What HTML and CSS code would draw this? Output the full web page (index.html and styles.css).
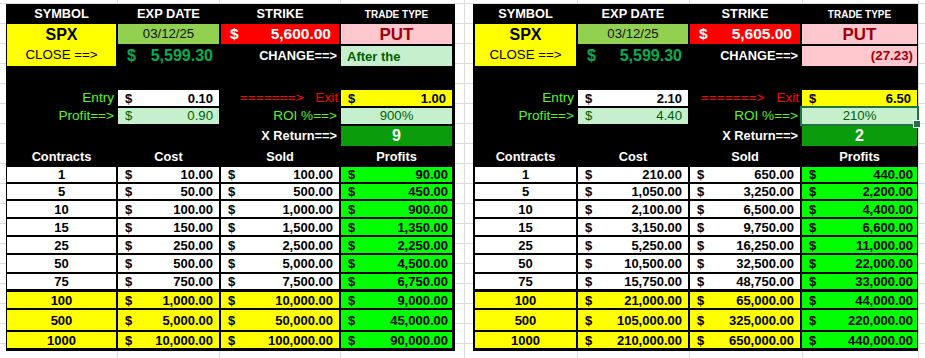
FILE: index.html
```html
<!DOCTYPE html>
<html lang="en">
<head>
<meta charset="utf-8">
<title>SPX Put Trade Calculator</title>
<link rel="stylesheet" href="styles.css">
</head>
<body>
<div class="sheet">
  <section class="calc calc--left">
    <div class="row row--head">
      <div class="cell hd">SYMBOL</div>
      <div class="cell hd">EXP DATE</div>
      <div class="cell hd">STRIKE</div>
      <div class="cell hd hd--small">TRADE TYPE</div>
    </div>
    <div class="row row--quote">
      <div class="cell symbol">SPX</div>
      <div class="cell date">03/12/25</div>
      <div class="cell money strike"><span>$</span><span>5,600.00</span></div>
      <div class="cell type">PUT</div>
    </div>
    <div class="row row--close">
      <div class="cell close-label">CLOSE ==&gt;</div>
      <div class="cell money close-price"><span>$</span><span>5,599.30</span></div>
      <div class="cell label-white">CHANGE==&gt;</div>
      <div class="cell change change--note">After the</div>
    </div>
    <div class="spacer"></div>
    <div class="inputs">
      <div class="row row--input">
        <div class="cell label-green">Entry</div>
        <div class="cell money entry"><span>$</span><span>0.10</span></div>
        <div class="cell exit-label"><span>=======&gt;</span><span>Exit</span></div>
        <div class="cell money exit"><span>$</span><span>1.00</span></div>
      </div>
      <div class="row row--input">
        <div class="cell label-green">Profit==&gt;</div>
        <div class="cell money profit"><span>$</span><span>0.90</span></div>
        <div class="cell label-green">ROI %==&gt;</div>
        <div class="cell roi">900%</div>
      </div>
      <div class="row row--xret">
        <div class="cell"></div>
        <div class="cell"></div>
        <div class="cell label-white">X Return==&gt;</div>
        <div class="cell xret">9</div>
      </div>
    </div>
    <div class="row row--colhead">
      <div class="cell colhead">Contracts</div>
      <div class="cell colhead">Cost</div>
      <div class="cell colhead">Sold</div>
      <div class="cell colhead">Profits</div>
    </div>
    <div class="data">
      <div class="row drow h15"><div class="cell qty">1</div><div class="cell money d"><span>$</span><span>10.00</span></div><div class="cell money d"><span>$</span><span>100.00</span></div><div class="cell money d gain"><span>$</span><span>90.00</span></div></div>
      <div class="row drow h15"><div class="cell qty">5</div><div class="cell money d"><span>$</span><span>50.00</span></div><div class="cell money d"><span>$</span><span>500.00</span></div><div class="cell money d gain"><span>$</span><span>450.00</span></div></div>
      <div class="row drow h16"><div class="cell qty">10</div><div class="cell money d"><span>$</span><span>100.00</span></div><div class="cell money d"><span>$</span><span>1,000.00</span></div><div class="cell money d gain"><span>$</span><span>900.00</span></div></div>
      <div class="row drow h16"><div class="cell qty">15</div><div class="cell money d"><span>$</span><span>150.00</span></div><div class="cell money d"><span>$</span><span>1,500.00</span></div><div class="cell money d gain"><span>$</span><span>1,350.00</span></div></div>
      <div class="row drow h16"><div class="cell qty">25</div><div class="cell money d"><span>$</span><span>250.00</span></div><div class="cell money d"><span>$</span><span>2,500.00</span></div><div class="cell money d gain"><span>$</span><span>2,250.00</span></div></div>
      <div class="row drow h17"><div class="cell qty">50</div><div class="cell money d"><span>$</span><span>500.00</span></div><div class="cell money d"><span>$</span><span>5,000.00</span></div><div class="cell money d gain"><span>$</span><span>4,500.00</span></div></div>
      <div class="row drow h15"><div class="cell qty">75</div><div class="cell money d"><span>$</span><span>750.00</span></div><div class="cell money d"><span>$</span><span>7,500.00</span></div><div class="cell money d gain"><span>$</span><span>6,750.00</span></div></div>
      <div class="row drow drow--big drow--first-big h16"><div class="cell qty">100</div><div class="cell money d"><span>$</span><span>1,000.00</span></div><div class="cell money d"><span>$</span><span>10,000.00</span></div><div class="cell money d gain"><span>$</span><span>9,000.00</span></div></div>
      <div class="row drow drow--big h20"><div class="cell qty">500</div><div class="cell money d"><span>$</span><span>5,000.00</span></div><div class="cell money d"><span>$</span><span>50,000.00</span></div><div class="cell money d gain"><span>$</span><span>45,000.00</span></div></div>
      <div class="row drow drow--big h16"><div class="cell qty">1000</div><div class="cell money d"><span>$</span><span>10,000.00</span></div><div class="cell money d"><span>$</span><span>100,000.00</span></div><div class="cell money d gain"><span>$</span><span>90,000.00</span></div></div>
    </div>
  </section>

  <section class="calc calc--right">
    <div class="row row--head">
      <div class="cell hd">SYMBOL</div>
      <div class="cell hd">EXP DATE</div>
      <div class="cell hd">STRIKE</div>
      <div class="cell hd hd--small">TRADE TYPE</div>
    </div>
    <div class="row row--quote">
      <div class="cell symbol">SPX</div>
      <div class="cell date">03/12/25</div>
      <div class="cell money strike"><span>$</span><span>5,605.00</span></div>
      <div class="cell type">PUT</div>
    </div>
    <div class="row row--close">
      <div class="cell close-label">CLOSE ==&gt;</div>
      <div class="cell money close-price"><span>$</span><span>5,599.30</span></div>
      <div class="cell label-white">CHANGE==&gt;</div>
      <div class="cell change change--loss">(27.23)</div>
    </div>
    <div class="spacer"></div>
    <div class="inputs">
      <div class="row row--input">
        <div class="cell label-green">Entry</div>
        <div class="cell money entry"><span>$</span><span>2.10</span></div>
        <div class="cell exit-label"><span>=======&gt;</span><span>Exit</span></div>
        <div class="cell money exit"><span>$</span><span>6.50</span></div>
      </div>
      <div class="row row--input">
        <div class="cell label-green">Profit==&gt;</div>
        <div class="cell money profit"><span>$</span><span>4.40</span></div>
        <div class="cell label-green">ROI %==&gt;</div>
        <div class="cell roi roi--selected">210%</div>
      </div>
      <div class="row row--xret">
        <div class="cell"></div>
        <div class="cell"></div>
        <div class="cell label-white">X Return==&gt;</div>
        <div class="cell xret">2</div>
      </div>
    </div>
    <div class="row row--colhead">
      <div class="cell colhead">Contracts</div>
      <div class="cell colhead">Cost</div>
      <div class="cell colhead">Sold</div>
      <div class="cell colhead">Profits</div>
    </div>
    <div class="data">
      <div class="row drow h15"><div class="cell qty">1</div><div class="cell money d"><span>$</span><span>210.00</span></div><div class="cell money d"><span>$</span><span>650.00</span></div><div class="cell money d gain"><span>$</span><span>440.00</span></div></div>
      <div class="row drow h15"><div class="cell qty">5</div><div class="cell money d"><span>$</span><span>1,050.00</span></div><div class="cell money d"><span>$</span><span>3,250.00</span></div><div class="cell money d gain"><span>$</span><span>2,200.00</span></div></div>
      <div class="row drow h16"><div class="cell qty">10</div><div class="cell money d"><span>$</span><span>2,100.00</span></div><div class="cell money d"><span>$</span><span>6,500.00</span></div><div class="cell money d gain"><span>$</span><span>4,400.00</span></div></div>
      <div class="row drow h16"><div class="cell qty">15</div><div class="cell money d"><span>$</span><span>3,150.00</span></div><div class="cell money d"><span>$</span><span>9,750.00</span></div><div class="cell money d gain"><span>$</span><span>6,600.00</span></div></div>
      <div class="row drow h16"><div class="cell qty">25</div><div class="cell money d"><span>$</span><span>5,250.00</span></div><div class="cell money d"><span>$</span><span>16,250.00</span></div><div class="cell money d gain"><span>$</span><span>11,000.00</span></div></div>
      <div class="row drow h17"><div class="cell qty">50</div><div class="cell money d"><span>$</span><span>10,500.00</span></div><div class="cell money d"><span>$</span><span>32,500.00</span></div><div class="cell money d gain"><span>$</span><span>22,000.00</span></div></div>
      <div class="row drow h15"><div class="cell qty">75</div><div class="cell money d"><span>$</span><span>15,750.00</span></div><div class="cell money d"><span>$</span><span>48,750.00</span></div><div class="cell money d gain"><span>$</span><span>33,000.00</span></div></div>
      <div class="row drow drow--big drow--first-big h16"><div class="cell qty">100</div><div class="cell money d"><span>$</span><span>21,000.00</span></div><div class="cell money d"><span>$</span><span>65,000.00</span></div><div class="cell money d gain"><span>$</span><span>44,000.00</span></div></div>
      <div class="row drow drow--big h20"><div class="cell qty">500</div><div class="cell money d"><span>$</span><span>105,000.00</span></div><div class="cell money d"><span>$</span><span>325,000.00</span></div><div class="cell money d gain"><span>$</span><span>220,000.00</span></div></div>
      <div class="row drow drow--big h16"><div class="cell qty">1000</div><div class="cell money d"><span>$</span><span>210,000.00</span></div><div class="cell money d"><span>$</span><span>650,000.00</span></div><div class="cell money d gain"><span>$</span><span>440,000.00</span></div></div>
    </div>
  </section>
</div>
</body>
</html>
```

FILE: styles.css
```css
* { box-sizing: border-box; }

html, body {
  margin: 0;
  height: 358px;
  overflow: hidden;
}

body {
  font-family: "Liberation Sans", Arial, sans-serif;
  color: #000;
  background-color: #fff;
  background-image:
    repeating-linear-gradient(to bottom, #dcdcdc 0, #dcdcdc 1px, transparent 1px, transparent 20px),
    linear-gradient(#dcdcdc, #dcdcdc),
    linear-gradient(#dcdcdc, #dcdcdc),
    linear-gradient(#dcdcdc, #dcdcdc),
    linear-gradient(#dcdcdc, #dcdcdc),
    linear-gradient(#dcdcdc, #dcdcdc),
    linear-gradient(#dcdcdc, #dcdcdc),
    linear-gradient(#dcdcdc, #dcdcdc),
    linear-gradient(#dcdcdc, #dcdcdc);
  background-size: 100% 20px, 1px 100%, 1px 100%, 1px 100%, 1px 100%, 1px 100%, 1px 100%, 1px 100%, 1px 100%;
  background-position: 0 3px, 117px 0, 219px 0, 340px 0, 464px 0, 577px 0, 689px 0, 802px 0, 918px 0;
  background-repeat: repeat, no-repeat, no-repeat, no-repeat, no-repeat, no-repeat, no-repeat, no-repeat, no-repeat;
}

.sheet {
  display: flex;
  align-items: flex-start;
  gap: 18px;
  padding: 4px 0 0 6px;
}

.calc {
  background: #000;
  display: flex;
  flex-direction: column;
}

.calc--left {
  width: 449px;
  padding: 0 3px 3px 1px;
}

.calc--right {
  width: 445px;
  padding: 0 1px 3px 2px;
}

.row {
  display: grid;
  column-gap: 2px;
}

.calc--left .row { grid-template-columns: 109px 101px 118px 111px; }
.calc--right .row { grid-template-columns: 101px 110px 110px 115px; }

.cell {
  display: flex;
  align-items: center;
  justify-content: center;
  white-space: nowrap;
  line-height: 1;
}

/* header */
.row--head { height: 20px; }
.hd {
  color: #fff;
  font-weight: bold;
  font-size: 12.8px;
  padding-top: 1px;
}
.hd--small { font-size: 10px; }

/* quote row */
.row--quote { height: 20px; }
.symbol {
  background: #ffff00;
  font-weight: bold;
  font-size: 16px;
  padding-top: 1px;
}
.date {
  background: #92d050;
  font-size: 13.2px;
  color: #111;
}
.money {
  justify-content: space-between;
  padding: 0 6px 0 7px;
}
.strike {
  background: #ff0000;
  color: #fff;
  font-weight: bold;
  font-size: 15.5px;
  padding: 0 8px 0 9px;
}
.type {
  background: #ffc7ce;
  color: #9c0006;
  font-weight: bold;
  font-size: 17px;
}

/* close row */
.row--close { height: 22px; }
.row--close .cell { align-self: end; height: 20px; }
.row--close .close-label {
  height: 22px;
  background: #ffff00;
  font-size: 13.3px;
  padding-bottom: 1px;
}
.close-price {
  color: #00b050;
  font-weight: bold;
  font-size: 16px;
  padding: 0 6px 0 9px;
}
.label-white {
  justify-content: flex-end;
  color: #fff;
  font-weight: bold;
  font-size: 12.8px;
  padding-right: 2px;
}
.change {
  font-weight: bold;
  font-size: 13px;
}
.change--note {
  background: #c6efce;
  color: #006100;
  justify-content: flex-start;
  padding-left: 6px;
}
.change--loss {
  background: #ffc7ce;
  color: #9c0006;
  justify-content: flex-end;
  padding-right: 4px;
  font-size: 13.3px;
}

.spacer { height: 24px; }

/* inputs */
.inputs {
  display: flex;
  flex-direction: column;
  gap: 2px;
}
.row--input { height: 16px; }
.row--xret { height: 20px; }

.label-green {
  justify-content: flex-end;
  color: #5cf22c;
  font-size: 13.6px;
  padding-right: 2px;
}
.entry {
  background: #fff;
  font-weight: bold;
  font-size: 13px;
}
.exit-label {
  justify-content: flex-end;
  gap: 12px;
  color: #ff0000;
  font-size: 13.6px;
  padding-right: 1px;
}
.exit {
  background: #ffff00;
  font-weight: bold;
  font-size: 13px;
}
.profit {
  background: #c6efce;
  color: #006100;
  font-size: 13.2px;
}
.roi {
  background: #c6efce;
  color: #006100;
  font-size: 13.2px;
}
.roi--selected {
  position: relative;
  outline: 2px solid #217346;
}
.roi--selected::after {
  content: "";
  position: absolute;
  right: -4px;
  bottom: -4px;
  width: 6px;
  height: 6px;
  background: #217346;
  border: 1px solid #fff;
}
.xret {
  background: #0a9c0a;
  color: #fff;
  font-weight: bold;
  font-size: 16px;
}

/* column headers */
.row--colhead { height: 21px; }
.colhead {
  color: #fff;
  font-weight: bold;
  font-size: 12.8px;
  padding-top: 1px;
}

/* data */
.data {
  display: flex;
  flex-direction: column;
  gap: 2px;
}
.drow .cell {
  background: #fff;
  font-weight: bold;
  font-size: 13px;
}
.drow .gain { background: #00ff00; padding-right: 4px; }
.drow--big .cell { background: #ffff00; }
.drow--big .gain { background: #00ff00; }
.drow--first-big { margin-top: 1px; }

.h15 { height: 15px; }
.h16 { height: 16px; }
.h17 { height: 17px; }
.h20 { height: 20px; }
```
